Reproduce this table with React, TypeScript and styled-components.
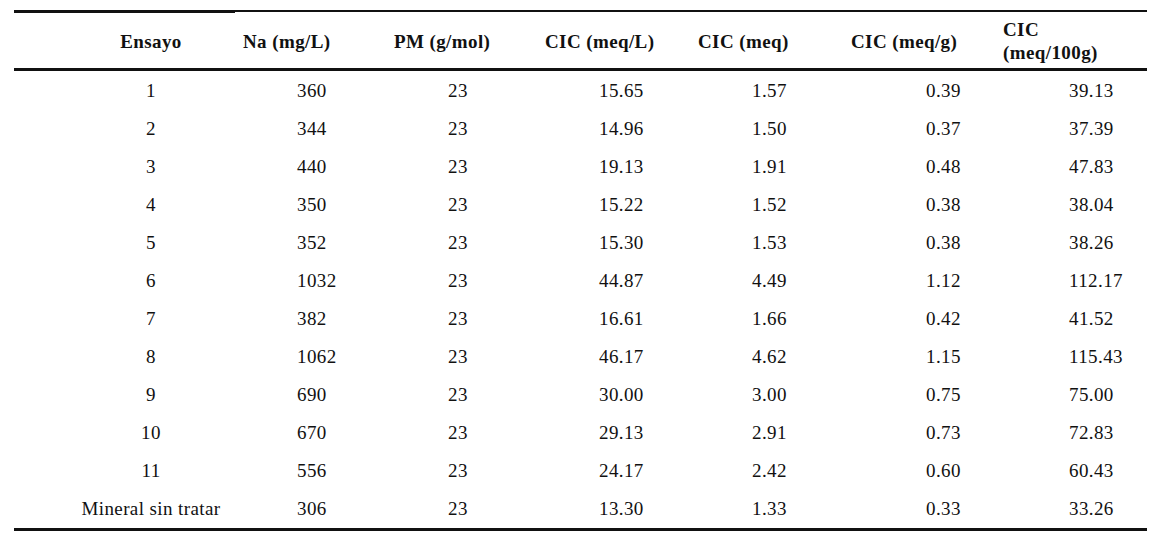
import React from "react";
import styled, { createGlobalStyle } from "styled-components";

const GlobalStyle = createGlobalStyle`
  html, body {
    margin: 0;
    padding: 0;
    background: #ffffff;
  }
  body {
    font-family: "Liberation Serif", "Times New Roman", serif;
    color: #111111;
  }
`;

const Page = styled.div`
  padding: 10px 18px 0 14px;
  width: 1133px;
`;

const Table = styled.table`
  border-collapse: separate;
  border-spacing: 0;
  table-layout: fixed;
  width: 1133px;
  font-family: "Liberation Serif", "Times New Roman", serif;
  font-size: 19px;
  letter-spacing: 0.4px;
  color: #111111;
`;

const Col = styled.col<{ $w: number }>`
  width: ${(p) => p.$w}px;
`;

const HeadCell = styled.th<{ $first?: boolean }>`
  height: 61px;
  padding: 2px 0 0 ${(p) => (p.$first ? "60px" : "8px")};
  padding-right: ${(p) => (p.$first ? "7px" : "0")};
  box-sizing: border-box;
  text-align: ${(p) => (p.$first ? "center" : "left")};
  vertical-align: middle;
  font-weight: bold;
  line-height: 23px;
  white-space: nowrap;
  border-top: ${(p) => (p.$first ? "3px" : "2px")} solid #111111;
  border-bottom: 3px solid #111111;
`;

const Body = styled.tbody`
  &::before {
    content: "";
    display: table-row;
    height: 1px;
  }
`;

const Cell = styled.td<{ $pad: number; $first?: boolean; $last?: boolean }>`
  height: 38px;
  box-sizing: border-box;
  padding: 0 ${(p) => (p.$first ? "7px" : "0")} 0 ${(p) => p.$pad}px;
  text-align: ${(p) => (p.$first ? "center" : "left")};
  vertical-align: middle;
  line-height: 38px;
  white-space: nowrap;
  border-bottom: ${(p) => (p.$last ? "3px solid #111111" : "none")};
`;

type Column = { label: React.ReactNode; width: number; pad: number };

const columns: Column[] = [
  { label: "Ensayo", width: 221, pad: 60 },
  { label: "Na (mg/L)", width: 151, pad: 62 },
  { label: "PM (g/mol)", width: 151, pad: 62 },
  { label: "CIC (meq/L)", width: 153, pad: 62 },
  { label: "CIC (meq)", width: 153, pad: 62 },
  { label: "CIC (meq/g)", width: 152, pad: 83 },
  {
    label: (
      <>
        CIC
        <br />
        (meq/100g)
      </>
    ),
    width: 152,
    pad: 74,
  },
];

const rows: string[][] = [
  ["1", "360", "23", "15.65", "1.57", "0.39", "39.13"],
  ["2", "344", "23", "14.96", "1.50", "0.37", "37.39"],
  ["3", "440", "23", "19.13", "1.91", "0.48", "47.83"],
  ["4", "350", "23", "15.22", "1.52", "0.38", "38.04"],
  ["5", "352", "23", "15.30", "1.53", "0.38", "38.26"],
  ["6", "1032", "23", "44.87", "4.49", "1.12", "112.17"],
  ["7", "382", "23", "16.61", "1.66", "0.42", "41.52"],
  ["8", "1062", "23", "46.17", "4.62", "1.15", "115.43"],
  ["9", "690", "23", "30.00", "3.00", "0.75", "75.00"],
  ["10", "670", "23", "29.13", "2.91", "0.73", "72.83"],
  ["11", "556", "23", "24.17", "2.42", "0.60", "60.43"],
  ["Mineral sin tratar", "306", "23", "13.30", "1.33", "0.33", "33.26"],
];

export default function App() {
  return (
    <>
      <GlobalStyle />
      <Page>
        <Table>
          <colgroup>
            {columns.map((c, i) => (
              <Col key={i} $w={c.width} />
            ))}
          </colgroup>
          <thead>
            <tr>
              {columns.map((c, i) => (
                <HeadCell key={i} $first={i === 0}>
                  {c.label}
                </HeadCell>
              ))}
            </tr>
          </thead>
          <Body>
            {rows.map((r, ri) => (
              <tr key={ri}>
                {r.map((v, ci) => (
                  <Cell
                    key={ci}
                    $pad={columns[ci].pad}
                    $first={ci === 0}
                    $last={ri === rows.length - 1}
                  >
                    {v}
                  </Cell>
                ))}
              </tr>
            ))}
          </Body>
        </Table>
      </Page>
    </>
  );
}
